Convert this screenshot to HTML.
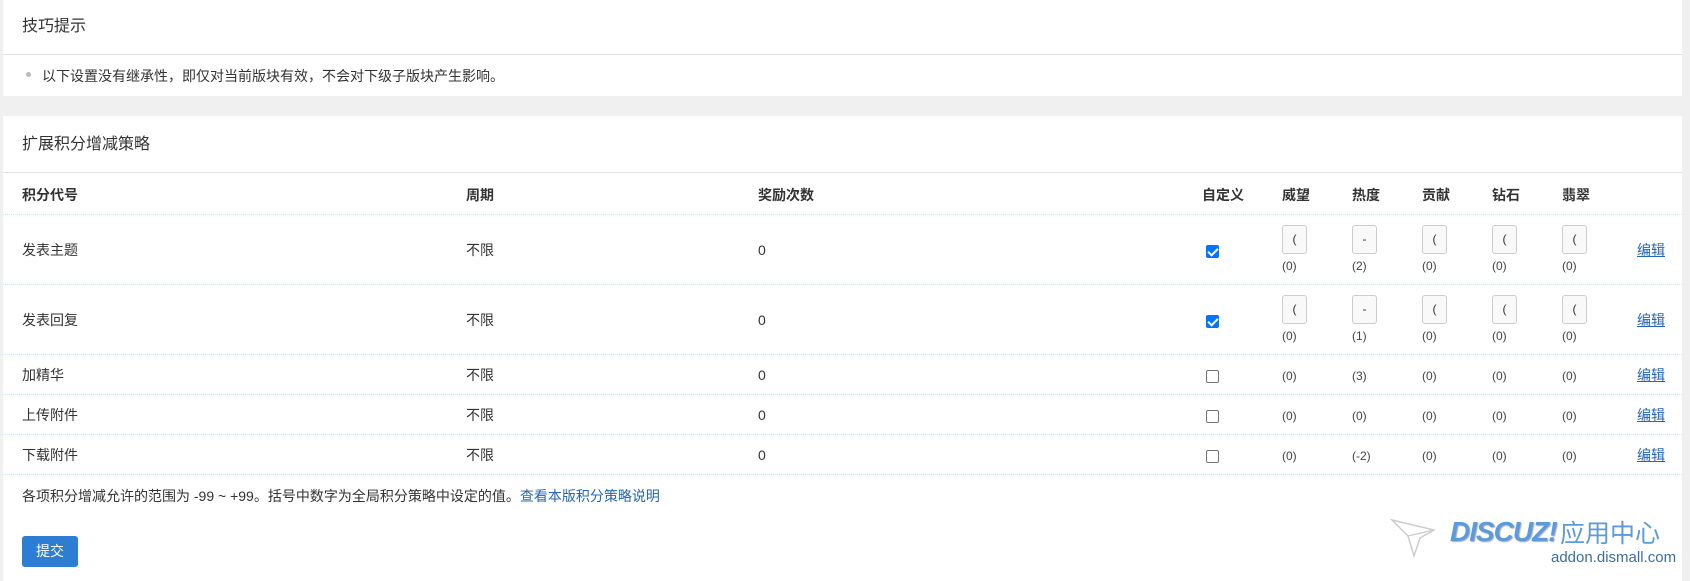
<!DOCTYPE html>
<html><head><meta charset="utf-8"><style>
*{margin:0;padding:0;box-sizing:border-box}
body{width:1690px;height:581px;background:#f0f0f0;font-family:"Liberation Sans","Noto Sans CJK SC",sans-serif;color:#333;position:relative;overflow:hidden}
.card{position:absolute;left:3px;width:1679px;background:#fff}
.a{position:absolute;white-space:nowrap}
.t{font-size:14px;line-height:20px}
.h{font-size:14px;font-weight:bold;line-height:20px}
.dl{position:absolute;left:3px;width:1679px;height:0;border-top:1px dotted #cfe6f5}
.inp{position:absolute;width:25px;height:29px;border:1px solid #ccc;border-radius:3px;background:#f9f9f9;font-size:12px;text-align:center;line-height:27px;color:#333}
.s{font-size:12px;line-height:14px;color:#444}
.cb{position:absolute;width:13px;height:13px;border:1px solid #767676;border-radius:2px;background:#fff}
.cb.on{background:#0075ff;border-color:#0075ff}
.cb.on:after{content:"";position:absolute;left:3px;top:0px;width:4px;height:8px;border:solid #fff;border-width:0 2px 2px 0;transform:rotate(45deg)}
.ed{font-size:14px;color:#2366b8;text-decoration:underline;line-height:20px}
</style></head><body>
<div class="card" style="top:0;height:96px"></div>
<div class="a" style="left:22px;top:16px;font-size:16px;line-height:22px;color:#333">技巧提示</div>
<div class="a" style="left:3px;top:54px;width:1679px;border-top:1px solid #e2e2e2"></div>
<div class="a" style="left:26px;top:72px;width:5px;height:5px;border-radius:50%;background:#bbb"></div>
<div class="a" style="left:42px;top:66px;font-size:14px;line-height:20px">以下设置没有继承性，即仅对当前版块有效，不会对下级子版块产生影响。</div>

<div class="card" style="top:116px;height:465px"></div>
<div class="a" style="left:22px;top:134px;font-size:16px;line-height:22px">扩展积分增减策略</div>
<div class="a" style="left:3px;top:172px;width:1679px;border-top:1px solid #e2e2e2"></div>

<div class="a h" style="left:22px;top:185px">积分代号</div>
<div class="a h" style="left:466px;top:185px">周期</div>
<div class="a h" style="left:758px;top:185px">奖励次数</div>
<div class="a h" style="left:1202px;top:185px">自定义</div>
<div class="a h" style="left:1282px;top:185px">威望</div>
<div class="a h" style="left:1352px;top:185px">热度</div>
<div class="a h" style="left:1422px;top:185px">贡献</div>
<div class="a h" style="left:1492px;top:185px">钻石</div>
<div class="a h" style="left:1562px;top:185px">翡翠</div>
<div class="dl" style="top:214px"></div>

<!-- row1 -->
<div class="a t" style="left:22px;top:240px">发表主题</div>
<div class="a t" style="left:466px;top:240px">不限</div>
<div class="a t" style="left:758px;top:240px">0</div>
<div class="cb on" style="left:1206px;top:245px"></div>
<div class="inp" style="left:1282px;top:225px">(</div><div class="a s" style="left:1282px;top:259px">(0)</div>
<div class="inp" style="left:1352px;top:225px">-</div><div class="a s" style="left:1352px;top:259px">(2)</div>
<div class="inp" style="left:1422px;top:225px">(</div><div class="a s" style="left:1422px;top:259px">(0)</div>
<div class="inp" style="left:1492px;top:225px">(</div><div class="a s" style="left:1492px;top:259px">(0)</div>
<div class="inp" style="left:1562px;top:225px">(</div><div class="a s" style="left:1562px;top:259px">(0)</div>
<div class="a ed" style="left:1637px;top:240px">编辑</div>
<div class="dl" style="top:284px"></div>

<!-- row2 -->
<div class="a t" style="left:22px;top:310px">发表回复</div>
<div class="a t" style="left:466px;top:310px">不限</div>
<div class="a t" style="left:758px;top:310px">0</div>
<div class="cb on" style="left:1206px;top:315px"></div>
<div class="inp" style="left:1282px;top:295px">(</div><div class="a s" style="left:1282px;top:329px">(0)</div>
<div class="inp" style="left:1352px;top:295px">-</div><div class="a s" style="left:1352px;top:329px">(1)</div>
<div class="inp" style="left:1422px;top:295px">(</div><div class="a s" style="left:1422px;top:329px">(0)</div>
<div class="inp" style="left:1492px;top:295px">(</div><div class="a s" style="left:1492px;top:329px">(0)</div>
<div class="inp" style="left:1562px;top:295px">(</div><div class="a s" style="left:1562px;top:329px">(0)</div>
<div class="a ed" style="left:1637px;top:310px">编辑</div>
<div class="dl" style="top:354px"></div>

<!-- row3 -->
<div class="a t" style="left:22px;top:365px">加精华</div>
<div class="a t" style="left:466px;top:365px">不限</div>
<div class="a t" style="left:758px;top:365px">0</div>
<div class="cb" style="left:1206px;top:370px"></div>
<div class="a s" style="left:1282px;top:369px">(0)</div><div class="a s" style="left:1352px;top:369px">(3)</div><div class="a s" style="left:1422px;top:369px">(0)</div><div class="a s" style="left:1492px;top:369px">(0)</div><div class="a s" style="left:1562px;top:369px">(0)</div>
<div class="a ed" style="left:1637px;top:365px">编辑</div>
<div class="dl" style="top:394px"></div>

<!-- row4 -->
<div class="a t" style="left:22px;top:405px">上传附件</div>
<div class="a t" style="left:466px;top:405px">不限</div>
<div class="a t" style="left:758px;top:405px">0</div>
<div class="cb" style="left:1206px;top:410px"></div>
<div class="a s" style="left:1282px;top:409px">(0)</div><div class="a s" style="left:1352px;top:409px">(0)</div><div class="a s" style="left:1422px;top:409px">(0)</div><div class="a s" style="left:1492px;top:409px">(0)</div><div class="a s" style="left:1562px;top:409px">(0)</div>
<div class="a ed" style="left:1637px;top:405px">编辑</div>
<div class="dl" style="top:434px"></div>

<!-- row5 -->
<div class="a t" style="left:22px;top:445px">下载附件</div>
<div class="a t" style="left:466px;top:445px">不限</div>
<div class="a t" style="left:758px;top:445px">0</div>
<div class="cb" style="left:1206px;top:450px"></div>
<div class="a s" style="left:1282px;top:449px">(0)</div><div class="a s" style="left:1352px;top:449px">(-2)</div><div class="a s" style="left:1422px;top:449px">(0)</div><div class="a s" style="left:1492px;top:449px">(0)</div><div class="a s" style="left:1562px;top:449px">(0)</div>
<div class="a ed" style="left:1637px;top:445px">编辑</div>
<div class="dl" style="top:474px"></div>

<div class="a" style="left:22px;top:486px;font-size:14px;line-height:20px">各项积分增减允许的范围为 -99 ~ +99。括号中数字为全局积分策略中设定的值。<span style="color:#2366b8">查看本版积分策略说明</span></div>

<div class="a" style="left:22px;top:536px;width:56px;height:31px;background:#2d7dd2;border-radius:3px;color:#fff;font-size:14px;line-height:31px;text-align:center">提交</div>

<!-- logo -->
<svg class="a" style="left:1390px;top:518px" width="48" height="40" viewBox="0 0 48 40">
<path d="M2 2 L44 12 L30 20 L24 38 L18 18 Z" fill="#fff" stroke="#ccc" stroke-width="1.5"/>
<path d="M18 18 L44 12" stroke="#ccc" stroke-width="1.2"/>
</svg>
<div class="a" style="left:1450px;top:516px;font-size:28px;line-height:32px;font-weight:bold;font-style:italic;color:#5b9bdc;letter-spacing:-1px;text-shadow:1px 1px 1px #aac">DISCUZ!</div>
<div class="a" style="left:1560px;top:516px;font-size:25px;line-height:32px;color:#5b9bdc;font-family:'Noto Sans CJK SC',sans-serif">应用中心</div>
<div class="a" style="left:1551px;top:549px;font-size:15px;line-height:18px;color:#3b6ea8">addon.dismall.com</div>
</body></html>
